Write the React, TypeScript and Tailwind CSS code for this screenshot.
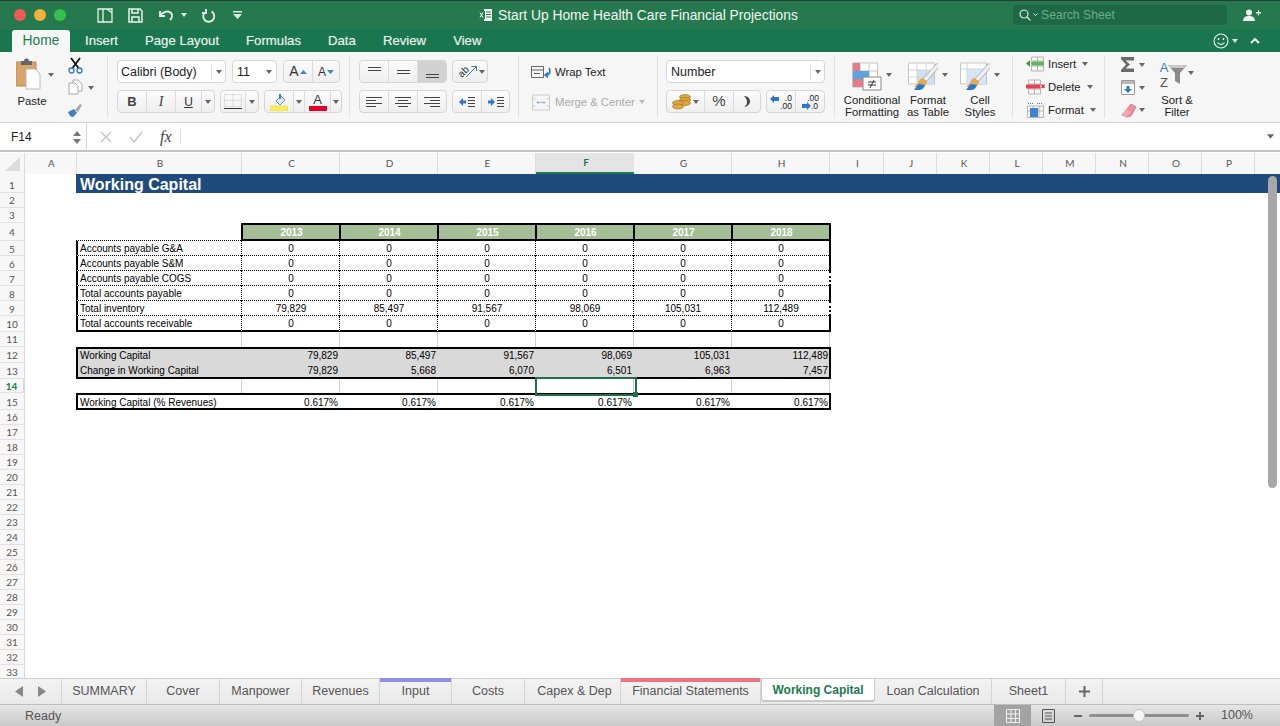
import React from "react";

const years = ["2013", "2014", "2015", "2016", "2017", "2018"];
const colHeads: [string, string][] = [
  ["A", "w-[52px]"], ["B", "w-[165px]"], ["C", "w-[98px]"], ["D", "w-[98px]"], ["E", "w-[98px]"], ["F", "w-[98px]"],
  ["G", "w-[98px]"], ["H", "w-[98px]"], ["I", "w-[54px]"], ["J", "w-[53px]"], ["K", "w-[53px]"], ["L", "w-[53px]"],
  ["M", "w-[53px]"], ["N", "w-[53px]"], ["O", "w-[53px]"], ["P", "w-[53px]"],
];
const tabs: { name: string; w: string; bar?: string }[] = [
  { name: "SUMMARY", w: "w-[85px]" },
  { name: "Cover", w: "w-[73px]" },
  { name: "Manpower", w: "w-[82px]" },
  { name: "Revenues", w: "w-[78px]" },
  { name: "Input", w: "w-[72px]", bar: "bg-[#8f8fe8]" },
  { name: "Costs", w: "w-[73px]" },
  { name: "Capex & Dep", w: "w-[96px] pl-[4px]" },
  { name: "Financial Statements", w: "w-[140px]", bar: "bg-[#f0727f]" },
];
const GRID = "grid grid-cols-[25px_51px_165px_98px_98px_98px_98px_98px_98px_55px_53px_53px_53px_53px_53px_53px_53px_1fr]";

const bodyRows = [
  { n: 5, h: "h-[15px]", label: "Accounts payable G&A", v: ["0", "0", "0", "0", "0", "0"] },
  { n: 6, h: "h-[15px]", label: "Accounts payable S&M", v: ["0", "0", "0", "0", "0", "0"] },
  { n: 7, h: "h-[15px]", label: "Accounts payable COGS", v: ["0", "0", "0", "0", "0", "0"], dotEnd: true },
  { n: 8, h: "h-[15px]", label: "Total accounts payable", v: ["0", "0", "0", "0", "0", "0"] },
  { n: 9, h: "h-[15px]", label: "Total inventory", v: ["79,829", "85,497", "91,567", "98,069", "105,031", "112,489"], dotEnd: true },
  { n: 10, h: "h-[16px]", label: "Total accounts receivable", v: ["0", "0", "0", "0", "0", "0"], last: true },
];

function Caret({ className = "" }: { className?: string }) {
  return (
    <svg width="6" height="4" viewBox="0 0 6 4" className={"shrink-0 " + className}>
      <path d="M0 0h6L3 4z" fill="#666" />
    </svg>
  );
}

function RowNum({ n, active, pad = "" }: { n: number; active?: boolean; pad?: string }) {
  return (
    <div
      className={
        "flex items-center justify-center border-r border-b border-r-[#d8d8d8] border-b-[#e2e2e2] bg-[#f7f7f7] font-['Lato',sans-serif] text-[10px] " +
        pad + " " +
        (active ? "border-r-2 border-r-[#1d7a50] font-bold text-[#1d7a50]" : "text-[#555]")
      }
    >
      {n}
    </div>
  );
}

function Seg({ className = "", children }: { className?: string; children: React.ReactNode }) {
  return (
    <div className={"flex h-[23px] overflow-hidden rounded-[4px] border border-[#d6d6d6] bg-linear-to-b from-[#fbfbfb] to-[#efefef] " + className}>
      {children}
    </div>
  );
}

function SegBtn({ className = "", children }: { className?: string; children: React.ReactNode }) {
  return <div className={"flex items-center justify-center border-r border-[#dcdcdc] last:border-r-0 " + className}>{children}</div>;
}

function Lines({ a, b, c, d }: { a: number[]; b: number[]; c: number[]; d: number[] }) {
  return (
    <svg width="16" height="12" viewBox="0 0 16 12" stroke="#444" strokeWidth="1">
      <path d={`M${a[0]} 1.5H${a[1]}M${b[0]} 4.5H${b[1]}M${c[0]} 7.5H${c[1]}M${d[0]} 10.5H${d[1]}`} />
    </svg>
  );
}

function IndentIcon({ flip }: { flip?: boolean }) {
  return (
    <svg width="18" height="12" viewBox="0 0 18 12">
      <path d={flip ? "M1 4.500h3V2l4 4-4 4V7.500H1z" : "M8 4.500H5V2L1 6l4 4V7.500h3z"} fill="#2f76c4" />
      <path d="M10 1.500h7M10 4.500h7M10 7.500h7M10 10.500h7" stroke="#444" />
    </svg>
  );
}

function Brush() {
  return (
    <>
      <path d="M28 2 15 17l3 3L31 5c1-2-1-4-3-3z" fill="#eee" stroke="#999" strokeWidth=".7" />
      <path d="M14 16c-3 1-3 3-4 5l-4 4h7c3 0 6-2 6-6z" fill="#e0a95a" />
      <path d="M6 28c2-2 3-5 5-6l6 1c-1 3-3 5-6 5z" fill="#2f76c4" />
    </>
  );
}

export default function App() {
  return (
    <div className="flex h-[726px] w-[1280px] flex-col overflow-hidden bg-white font-['Liberation_Sans',Arial,sans-serif] text-black">
      {/* title bar */}
      <div className="flex h-[29px] shrink-0 items-center border-t border-t-[#2c3a33] bg-[#26794f] text-white">
        <div className="flex w-[479px] items-center pl-[14px]">
          <span className="h-3 w-3 rounded-full bg-[#ee5c54]" />
          <span className="ml-2 h-3 w-3 rounded-full bg-[#f3b13c]" />
          <span className="ml-2 h-3 w-3 rounded-full bg-[#36c04b]" />
          <svg width="16" height="15" viewBox="0 0 16 15" className="ml-[31px]" fill="none" stroke="#e8f2ec" strokeWidth="1.300">
            <path d="M1 1h14v13H1zM6 1v13M10 1l5 4v9" />
          </svg>
          <svg width="15" height="15" viewBox="0 0 15 15" className="ml-[15px]" fill="none" stroke="#e8f2ec" strokeWidth="1.500">
            <path d="M1 1h11l2 2v11H1zM4 1v4h6V1M4 14V9h7v5" />
          </svg>
          <svg width="16" height="12" viewBox="0 0 16 12" className="ml-[15px]" fill="none" stroke="#e8f2ec" strokeWidth="1.800">
            <path d="M2 2v5h5M2 7c2-4 8-6 11-3 2 2 1 5-1 7" />
          </svg>
          <Caret className="ml-[7px] [&>path]:fill-[#dcebe2]" />
          <svg width="15" height="15" viewBox="0 0 15 15" className="ml-[14px]" fill="none" stroke="#e8f2ec" strokeWidth="1.800">
            <path d="M5 3.500a5.500 5.500 0 1 0 5.500 0M5 1v4H1" />
          </svg>
          <svg width="9" height="8" viewBox="0 0 9 8" className="ml-[17px]">
            <path d="M0 0h9v1.500H0zM0 3h9L4.500 8z" fill="#dcebe2" />
          </svg>
        </div>
        <div className="flex w-[534px] items-center">
          <svg width="14" height="14" viewBox="0 0 14 14" className="mr-[5px]">
            <path d="M5 1h8v12H5z" fill="#f4f8f5" />
            <path d="M7 4h5M7 6.500h5M7 9h5" stroke="#26794f" />
            <path d="M0 3h6v8H0z" fill="#26794f" />
            <path d="M1 4.500l3 5M4 4.500l-3 5" stroke="#fff" />
          </svg>
          <span className="pt-[3px] text-[13.800px] text-[#eef5f0]">Start Up Home Health Care Financial Projections</span>
        </div>
        <div className="flex h-[20px] w-[214px] items-center rounded-[4px] bg-[#1e6845] pl-[6px]">
          <svg width="12" height="12" viewBox="0 0 12 12" fill="none" stroke="#d9e8df" strokeWidth="1.200">
            <circle cx="5" cy="5" r="4" />
            <path d="M8 8l3.500 3.500" />
          </svg>
          <svg width="5" height="4" viewBox="0 0 5 4" className="ml-[2px]" fill="none" stroke="#d9e8df">
            <path d="M.5.500l2 2 2-2" />
          </svg>
          <span className="ml-[3px] text-[12.200px] text-[#6eab8b]">Search Sheet</span>
        </div>
        <svg width="18" height="12" viewBox="0 0 18 12" className="ml-[16px]" fill="#eef5f0">
          <circle cx="6" cy="3.500" r="3" />
          <path d="M0 12c0-4 3-5 6-5s6 1 6 5zM13 3h2V1h1v2h2v1.500h-2v2h-1v-2h-2z" />
        </svg>
      </div>

      {/* menu tabs */}
      <div className="flex h-[23px] shrink-0 items-end bg-[#19764f] pl-[12px] text-[13.200px] text-[#e6f0ea] [text-shadow:0_0_1px_rgba(255,255,255,.45)]">
        <div className="flex h-[22px] w-[58px] items-center justify-center rounded-t-[3px] bg-[#f6f6f6] pt-[1px] text-[13.800px] text-[#1d7a50] [text-shadow:none]">Home</div>
        <span className="mt-[1px] ml-[15px] self-center">Insert</span>
        <span className="mt-[1px] ml-[27px] self-center">Page Layout</span>
        <span className="mt-[1px] ml-[27px] self-center">Formulas</span>
        <span className="mt-[1px] ml-[27px] self-center">Data</span>
        <span className="mt-[1px] ml-[27px] self-center">Review</span>
        <span className="mt-[1px] ml-[27px] self-center">View</span>
        <div className="ml-auto flex items-center self-center pr-[20px]">
          <svg width="16" height="16" viewBox="0 0 16 16" fill="none" stroke="#eef5f0" strokeWidth="1.100">
            <circle cx="8" cy="8" r="7" />
            <path d="M4.500 9.500c1.500 2.500 5.500 2.500 7 0" />
            <path d="M5.500 5v2M10.500 5v2" strokeWidth="1.400" />
          </svg>
          <Caret className="ml-[3px] [&>path]:fill-[#dcebe2]" />
          <svg width="10" height="6" viewBox="0 0 10 6" className="ml-[12px]" fill="none" stroke="#eef5f0" strokeWidth="2">
            <path d="M1 5l4-4 4 4" />
          </svg>
        </div>
      </div>

      {/* ribbon */}
      <div className="flex h-[71px] shrink-0 border-b border-[#d4d4d4] bg-[#f6f6f6] text-[11.300px] text-[#222]">
        {/* clipboard */}
        <div className="my-[4px] flex w-[108px] border-r border-[#e2e2e2] pl-[15px]">
          <div className="flex w-[34px] flex-col items-center">
            <svg width="25" height="32" viewBox="0 0 25 32" className="mt-[2px] -ml-[7px]">
              <path d="M0 4h20v24H0z" fill="#d8a468" stroke="#b98a52" />
              <path d="M5 3h3a2.500 2.500 0 0 1 5 0h3v4H5z" fill="#666" />
              <path d="M10 11h9l5 5v15H10z" fill="#fff" stroke="#bbb" />
            </svg>
            <span className="mt-[3px]">Paste</span>
          </div>
          <Caret className="mt-[17px] -ml-[1px]" />
          <div className="ml-[6px] flex w-[30px] flex-col items-center">
            <svg width="15" height="17" viewBox="0 0 15 17" fill="none" className="mt-[1px]">
              <path d="M3 1l7.500 10M12 1L4.500 11" stroke="#111" strokeWidth="1.800" />
              <circle cx="3.500" cy="13.500" r="2.500" stroke="#2f76c4" strokeWidth="1.300" />
              <circle cx="11.500" cy="13.500" r="2.500" stroke="#2f76c4" strokeWidth="1.300" />
            </svg>
            <svg width="15" height="16" viewBox="0 0 15 16" fill="#fbfbfb" stroke="#aaa" className="mt-[5px]">
              <path d="M5 1h5l4 4v7H5z" />
              <path d="M1 4h6l3 3v8H1z" />
            </svg>
            <svg width="16" height="15" viewBox="0 0 16 15" className="mt-[8px]">
              <path d="M8 7l5-6 2 1-4 7z" fill="#aaa" />
              <path d="M1 9l6-3 3 4-4 4c-2 0-4-2-5-5z" fill="#3f7fc0" />
            </svg>
          </div>
          <Caret className="mt-[30px] -ml-[2px]" />
        </div>

        {/* font */}
        <div className="my-[4px] flex w-[242px] flex-col gap-[7px] border-r border-[#e2e2e2] pt-[4px] pl-[9px]">
          <div className="flex gap-[6px]">
            <div className="flex h-[23px] w-[109px] items-center rounded-[4px] border border-[#d6d6d6] bg-white pt-[1px] pl-[3px] text-[12.500px]">
              Calibri (Body)
              <span className="ml-auto flex h-[15px] w-[14px] items-center justify-center border-l border-[#ddd]"><Caret /></span>
            </div>
            <div className="flex h-[23px] w-[45px] items-center rounded-[4px] border border-[#d6d6d6] bg-white pt-[1px] pl-[4px] text-[12.500px]">
              11
              <span className="ml-auto flex h-[15px] w-[14px] items-center justify-center"><Caret /></span>
            </div>
            <Seg className="w-[57px]">
              <SegBtn className="w-[29px] gap-[1px] text-[14px] text-[#333]">
                A
                <svg width="7" height="4" viewBox="0 0 7 4"><path d="M0 4l3.500-4L7 4z" fill="#3f84c8" /></svg>
              </SegBtn>
              <SegBtn className="flex-1 gap-[1px] text-[12px] text-[#333]">
                A
                <svg width="7" height="4" viewBox="0 0 7 4"><path d="M0 0h7L3.500 4z" fill="#3f84c8" /></svg>
              </SegBtn>
            </Seg>
          </div>
          <div className="flex">
            <Seg className="w-[98px]">
              <SegBtn className="w-[29px] text-[13px] font-bold text-[#444]">B</SegBtn>
              <SegBtn className="w-[29px] font-['Liberation_Serif',serif] text-[14px] text-[#444] italic">I</SegBtn>
              <SegBtn className="w-[26px] text-[12px] text-[#333] underline">U</SegBtn>
              <SegBtn className="flex-1"><Caret /></SegBtn>
            </Seg>
            <Seg className="ml-[5px] w-[39px]">
              <SegBtn className="w-[25px]">
                <svg width="18" height="15" viewBox="0 0 18 15" fill="none">
                  <path d="M.5.500h17v12H.500zM9 .500v12M.5 6.500h17" stroke="#c4c4c4" strokeDasharray="1 1" />
                  <path d="M0 14.500h18" stroke="#333" />
                </svg>
              </SegBtn>
              <SegBtn className="flex-1"><Caret /></SegBtn>
            </Seg>
            <Seg className="ml-[5px] w-[78px]">
              <SegBtn className="w-[29px]">
                <svg width="18" height="19" viewBox="0 0 18 19">
                  <path d="M6 9l5-5 4 4-5 5z" fill="#dfe8f2" stroke="#6a8fb6" />
                  <path d="M9 2h2v5H9z" fill="#3f7fc0" />
                  <path d="M0 14h18v5H0z" fill="#f7ef55" stroke="#e2d93d" strokeWidth=".6" />
                </svg>
              </SegBtn>
              <SegBtn className="w-[11px] border-r"><Caret /></SegBtn>
              <SegBtn className="w-[26px]">
                <span className="flex flex-col items-center text-[13px] leading-[13px] text-[#333]">
                  A
                  <span className="h-[5px] w-[18px] bg-[#e4002b]" />
                </span>
              </SegBtn>
              <SegBtn className="flex-1"><Caret /></SegBtn>
            </Seg>
          </div>
        </div>

        {/* alignment */}
        <div className="my-[4px] flex w-[169px] flex-col gap-[7px] border-r border-[#e2e2e2] pt-[4px] pl-[9px]">
          <div className="flex gap-[5px]">
            <Seg className="w-[88px]">
              <SegBtn className="w-[29px] pb-[6px]">
                <svg width="13" height="4" viewBox="0 0 13 4" stroke="#444"><path d="M0 .500h13M0 3.500h13" /></svg>
              </SegBtn>
              <SegBtn className="w-[29px]">
                <svg width="13" height="4" viewBox="0 0 13 4" stroke="#444"><path d="M0 .500h13M0 3.500h13" /></svg>
              </SegBtn>
              <SegBtn className="flex-1 bg-[#d2d2d2] pt-[9px]">
                <svg width="13" height="4" viewBox="0 0 13 4" stroke="#444"><path d="M0 .500h13M0 3.500h13" /></svg>
              </SegBtn>
            </Seg>
            <Seg className="w-[36px] items-center pl-[5px]">
              <span className="-rotate-45 text-[10px] leading-[10px] text-[#333]">ab</span>
              <svg width="12" height="12" viewBox="0 0 12 12" fill="none" className="-ml-[4px]">
                <path d="M1 11L11 1M6.500 .5H11.500V5" stroke="#2f76c4" />
              </svg>
              <Caret className="ml-[2px]" />
            </Seg>
          </div>
          <div className="flex gap-[5px]">
            <Seg className="w-[88px]">
              <SegBtn className="w-[29px]"><Lines a={[0, 16]} b={[0, 10]} c={[0, 16]} d={[0, 10]} /></SegBtn>
              <SegBtn className="w-[29px]"><Lines a={[0, 16]} b={[3, 13]} c={[0, 16]} d={[3, 13]} /></SegBtn>
              <SegBtn className="flex-1"><Lines a={[0, 16]} b={[6, 16]} c={[0, 16]} d={[6, 16]} /></SegBtn>
            </Seg>
            <Seg className="w-[58px]">
              <SegBtn className="w-[29px]"><IndentIcon /></SegBtn>
              <SegBtn className="flex-1"><IndentIcon flip /></SegBtn>
            </Seg>
          </div>
        </div>

        {/* wrap and merge */}
        <div className="my-[4px] flex w-[139px] flex-col border-r border-[#e2e2e2] pl-[12px]">
          <div className="mt-[8px] flex items-center">
            <svg width="21" height="14" viewBox="0 0 21 14" fill="none">
              <path d="M.5 1.500h12v11H.500zM.5 5h12M3 8.500h6" stroke="#666" />
              <path d="M18 3c2 3 1 7-3 7M17 7.500l-3 2.500 3 2.500" stroke="#2f76c4" strokeWidth="1.600" />
            </svg>
            <span className="ml-[3px]">Wrap Text</span>
          </div>
          <div className="mt-[13px] flex items-center text-[#aaa]">
            <svg width="18" height="17" viewBox="0 0 18 17" fill="none" className="ml-[1px]">
              <path d="M.5 1h17v15H.500zM.5 5h3M14.500 5h3M.5 12h3M14.500 12h3" stroke="#ccc" />
              <path d="M5 8.500h8M6.500 7L5 8.500 6.500 10M11.500 7L13 8.500 11.500 10" stroke="#8db6de" />
            </svg>
            <span className="ml-[5px]">Merge & Center</span>
            <Caret className="ml-[4px] opacity-40" />
          </div>
        </div>

        {/* number */}
        <div className="my-[4px] flex w-[177px] flex-col gap-[7px] border-r border-[#e2e2e2] pt-[4px] pl-[8px]">
          <div className="flex h-[23px] w-[159px] items-center rounded-[4px] border border-[#d6d6d6] bg-white pt-[1px] pl-[4px] text-[12.500px]">
            Number
            <span className="ml-auto flex h-[15px] w-[14px] items-center justify-center border-l border-[#ddd]"><Caret /></span>
          </div>
          <div className="flex gap-[5px]">
            <Seg className="w-[95px]">
              <SegBtn className="w-[38px] gap-[2px]">
                <svg width="19" height="16" viewBox="0 0 19 16">
                  <ellipse cx="13" cy="3" rx="5.500" ry="2.500" fill="#e0a83c" stroke="#9b6f1c" strokeWidth=".6" />
                  <ellipse cx="13" cy="6" rx="5.500" ry="2.500" fill="#e0a83c" stroke="#9b6f1c" strokeWidth=".6" />
                  <ellipse cx="13" cy="9" rx="5.500" ry="2.500" fill="#e0a83c" stroke="#9b6f1c" strokeWidth=".6" />
                  <ellipse cx="6" cy="9" rx="5.500" ry="2.500" fill="#e0a83c" stroke="#9b6f1c" strokeWidth=".6" />
                  <ellipse cx="6" cy="12.500" rx="5.500" ry="2.500" fill="#e0a83c" stroke="#9b6f1c" strokeWidth=".6" />
                </svg>
                <Caret />
              </SegBtn>
              <SegBtn className="w-[29px] text-[15px] text-[#444]">%</SegBtn>
              <SegBtn className="flex-1 text-[15px] font-bold text-[#444]">
                <svg width="6" height="11" viewBox="0 0 6 11"><path d="M0 0c4 0 6 3 6 5.500S3 11 0 11c2-1 3-3 3-5S2 2 0 0z" fill="#444" /></svg>
              </SegBtn>
            </Seg>
            <Seg className="w-[59px]">
              <SegBtn className="w-[29px]">
                <svg width="9" height="8" viewBox="0 0 9 8" className="mb-[5px]"><path d="M0 4l4-4v2h5v4H4v2z" fill="#2f76c4" /></svg>
                <span className="ml-[1px] text-right text-[8.500px] leading-[8px]">.0<br />.00</span>
              </SegBtn>
              <SegBtn className="flex-1 flex-col">
                <span className="self-end pr-[5px] text-[8.500px] leading-[8px]">.00</span>
                <span className="flex items-center">
                  <svg width="9" height="8" viewBox="0 0 9 8"><path d="M9 4L5 0v2H0v4h5v2z" fill="#2f76c4" /></svg>
                  <span className="text-[8.500px] leading-[8px]">.0</span>
                </span>
              </SegBtn>
            </Seg>
          </div>
        </div>

        {/* styles */}
        <div className="my-[4px] flex w-[178px] border-r border-[#e2e2e2] pl-[8px] leading-[12px]">
          <div className="flex w-[58px] flex-col items-center">
            <div className="mt-[6px] flex h-[34px] items-start">
              <svg width="30" height="29" viewBox="0 0 30 29">
                <path d="M.5 1h25v24H.500zM8 1v24M17 1v24M.5 9h25M.5 17h25" fill="#fff" stroke="#c4c4c4" />
                <path d="M1 1h7v8H1z" fill="#e67c87" />
                <path d="M8 9h9v8H8z" fill="#5aa5e0" />
                <path d="M1 9h7v8H1z" fill="#5aa5e0" />
                <path d="M1 17h10v8H1z" fill="#e67c87" />
                <path d="M11 15h18v13H11z" fill="#fff" stroke="#888" />
                <path d="M16 20h8M16 23h8M22 18l-4 8" stroke="#333" fill="none" />
              </svg>
              <Caret className="mt-[11px] ml-[4px]" />
            </div>
            <span className="text-center">Conditional<br />Formatting</span>
          </div>
          <div className="flex w-[54px] flex-col items-center">
            <div className="mt-[6px] flex h-[34px] items-start">
              <svg width="30" height="29" viewBox="0 0 30 29">
                <path d="M.5 1h26v21H.500z" fill="#fff" stroke="#c4c4c4" />
                <path d="M9 8h17v14H9z" fill="#cfe0f4" />
                <path d="M9 1v21M18 1v21M.5 8h26M.5 15h26" stroke="#d4d4d4" fill="none" />
                <Brush />
              </svg>
              <Caret className="mt-[11px] ml-[4px]" />
            </div>
            <span className="text-center">Format<br />as Table</span>
          </div>
          <div className="flex w-[50px] flex-col items-center">
            <div className="mt-[6px] flex h-[34px] items-start">
              <svg width="30" height="29" viewBox="0 0 30 29">
                <path d="M.5 1h26v21H.500z" fill="#fff" stroke="#c4c4c4" />
                <path d="M7 7h19v15H7z" fill="#d6e6f7" />
                <path d="M7 1v21M.5 7h26" stroke="#d4d4d4" fill="none" />
                <Brush />
              </svg>
              <Caret className="mt-[11px] ml-[4px]" />
            </div>
            <span className="text-center">Cell<br />Styles</span>
          </div>
        </div>

        {/* cells */}
        <div className="my-[4px] flex w-[92px] flex-col gap-[7px] border-r border-[#e2e2e2] pl-[13px]">
          <div className="flex h-[16px] items-center">
            <svg width="19" height="16" viewBox="0 0 19 16" fill="none">
              <path d="M5.500 1h12v14h-12zM5.500 5h12M5.500 10h12M11.500 1v14" stroke="#b5b5b5" />
              <path d="M6 5.500h12v4H6z" fill="#5db85c" />
              <path d="M0 7.500l4-3.500v7z" fill="#3b9e3a" />
            </svg>
            <span className="ml-[3px]">Insert</span>
            <Caret className="ml-[6px]" />
          </div>
          <div className="flex h-[16px] items-center">
            <svg width="19" height="16" viewBox="0 0 19 16" fill="none">
              <path d="M2.500 1h12v14h-12zM2.500 5h12M2.500 10h12M8.500 1v14" stroke="#b5b5b5" />
              <path d="M0 5.500h14v4H0z" fill="#e4414f" />
              <path d="M15.500 5.500l3 3.500M18.500 5.500l-3 3.500" stroke="#d92f3e" strokeWidth="1.300" />
            </svg>
            <span className="ml-[3px]">Delete</span>
            <Caret className="ml-[6px]" />
          </div>
          <div className="flex h-[16px] items-center">
            <svg width="19" height="16" viewBox="0 0 19 16" fill="none">
              <path d="M1.500 4h16v11.500h-16zM7 4v11.500M13 4v11.500M1.500 9h16" stroke="#b5b5b5" />
              <path d="M4 6h8v9H4z" fill="#3f84c8" />
              <path d="M2 1.500h6M11 1.500h6" stroke="#3f84c8" strokeDasharray="1 1" />
            </svg>
            <span className="ml-[3px]">Format</span>
            <Caret className="ml-[6px]" />
          </div>
        </div>

        {/* editing */}
        <div className="my-[4px] flex pl-[16px]">
          <div className="flex w-[26px] flex-col pt-[1px]">
            <div className="flex h-[16px] items-center">
              <svg width="14" height="15" viewBox="0 0 14 15"><path d="M0 0h13v3.500H4.500L9 7.500 4.500 11.500H13V15H0v-2l5-5.500L0 2z" fill="#6a6a6a" /></svg>
              <Caret className="ml-[4px]" />
            </div>
            <div className="mt-[7px] flex h-[16px] items-center">
              <svg width="14" height="15" viewBox="0 0 14 15" fill="none">
                <path d="M.5.500h13v14H.500z" fill="#fff" stroke="#999" />
                <path d="M1 1h12v3H1z" fill="#bbb" />
                <path d="M5.500 6h3v3H11l-4 4-4-4h2.500z" fill="#2f76c4" />
              </svg>
              <Caret className="ml-[4px]" />
            </div>
            <div className="mt-[7px] flex h-[16px] items-center">
              <svg width="16" height="15" viewBox="0 0 16 15">
                <path d="M10 1l5 3-5 9-4 1-5-2z" fill="#ef8d9b" stroke="#c76473" strokeWidth=".7" />
                <path d="M1 12l4-6 5 3-4 5z" fill="#f3a9b4" />
              </svg>
              <Caret className="ml-[2px]" />
            </div>
          </div>
          <div className="ml-[5px] flex w-[50px] flex-col items-center leading-[12px]">
            <div className="mt-[4px] flex h-[36px] items-start">
              <span className="flex flex-col items-center text-[13px] leading-[15px]">
                <span className="text-[#3a7fc6]">A</span>
                <span className="text-[#555]">Z</span>
              </span>
              <svg width="19" height="20" viewBox="0 0 19 20" className="mt-[5px]">
                <path d="M0 0h19l-7 8v11l-5-3V8z" fill="#8a8a8a" />
                <path d="M0 0h19l-3 3H3z" fill="#c8c8c8" />
              </svg>
              <Caret className="mt-[11px] ml-[1px]" />
            </div>
            <span className="text-center">Sort &<br />Filter</span>
          </div>
        </div>
      </div>

      {/* formula bar */}
      <div className="flex h-[27px] shrink-0 items-center bg-white">
        <div className="flex h-full w-[87px] items-center border-r border-[#d4d4d4] pt-[1px] pl-[11px] text-[12px] text-[#222]">
          F14
          <span className="ml-[41px] flex flex-col gap-[3px]">
            <svg width="8" height="5" viewBox="0 0 8 5"><path d="M0 5l4-5 4 5z" fill="#777" /></svg>
            <svg width="8" height="5" viewBox="0 0 8 5"><path d="M0 0h8L4 5z" fill="#777" /></svg>
          </span>
        </div>
        <svg width="12" height="12" viewBox="0 0 12 12" className="ml-[13px]" fill="none" stroke="#c8c8c8" strokeWidth="1.600"><path d="M1 1l10 10M11 1L1 11" /></svg>
        <svg width="14" height="12" viewBox="0 0 14 12" className="ml-[17px]" fill="none" stroke="#c8c8c8" strokeWidth="1.600"><path d="M1 6l4 5 8-10" /></svg>
        <span className="ml-[17px] pt-[1px] font-['Liberation_Serif',serif] text-[16px] text-[#444] italic">fx</span>
        <span className="ml-[8px] h-[15px] border-l border-[#ddd]" />
        <Caret className="mr-[6px] ml-auto h-[5px] w-[7px]" />
      </div>
      <div className="h-[3px] shrink-0 border-t-2 border-[#c4c4c4]" />

      {/* column headers */}
      <div className="flex h-[21px] shrink-0 bg-[#f7f7f7] font-['Lato',sans-serif] text-[10px] text-[#555]">
        <div className="flex w-[25px] shrink-0 items-end justify-center border-r border-[#dcdcdc] pb-[3px]">
          <svg width="15" height="14" viewBox="0 0 15 14"><path d="M15 0v14H0z" fill="#dcdcdc" /></svg>
        </div>
        {colHeads.map(([c, w]) => (
          <div
            key={c}
            className={
              "flex shrink-0 items-center justify-center pl-[2px] " + w + " " +
              (c === "F" ? "border-b-2 border-b-[#1d7a50] bg-[#e4e4e4] font-bold text-[#1d7a50]" : "border-r border-[#dcdcdc]")
            }
          >
            {c}
          </div>
        ))}
        <div className="flex-1" />
      </div>

      {/* sheet */}
      <div className="relative min-h-0 flex-1 overflow-hidden text-[10px] leading-none">
        <div className={GRID + " h-[19px]"}>
          <RowNum n={1} pad="pt-[3px]" />
          <div />
          <div className="col-start-3 col-end-[-1] flex items-center bg-[#1f4b7c] pt-[2px] pl-[4px] text-[16px] font-bold text-white">Working Capital</div>
        </div>
        {[2, 3].map(n => (
          <div key={n} className={GRID + " h-[15px]"}><RowNum n={n} /></div>
        ))}

        <div className={GRID + " h-[18px]"}>
          <RowNum n={4} pad="pt-[1px]" />
          <div />
          <div className="border-b border-black [border-bottom-style:dotted]!" />
          {years.map(y => (
            <div key={y} className="flex items-center justify-center border-t-2 border-b-2 border-l-2 border-black bg-[#a4bf96] pt-[1px] pl-[1px] font-bold text-white">{y}</div>
          ))}
          <div className="border-l-2 border-black" />
        </div>

        {bodyRows.map(r => (
          <div key={r.n} className={GRID + " " + r.h}>
            <RowNum n={r.n} pad="pt-[1px]" />
            <div />
            <div className={"flex items-center border-l-2 border-black pt-[1px] pl-[2px] " + (r.last ? "border-b-2" : "border-b [border-bottom-style:dotted]!")}>{r.label}</div>
            {r.v.map((v, i) => (
              <div
                key={i}
                className={
                  "flex items-center justify-center border-l border-black pt-[1px] pl-[1px] [border-left-style:dotted]! " +
                  (r.last ? "border-b-2" : "border-b [border-bottom-style:dotted]!")
                }
              >
                {v}
              </div>
            ))}
            <div className={"border-l-2 border-black " + (r.dotEnd ? "[border-left-style:dotted]!" : "")} />
          </div>
        ))}

        <div className={GRID + " h-[15px]"}>
          <RowNum n={11} />
          <div />
          <div />
          {years.map(y => <div key={y} className="border-l border-[#d0d0d0]" />)}
          <div className="border-l border-[#d0d0d0]" />
        </div>

        <div className={GRID + " h-[16px]"}>
          <RowNum n={12} />
          <div />
          <div className="flex items-center border-t-2 border-l-2 border-black bg-[#d9d9d9] pl-[2px]">Working Capital</div>
          {["79,829", "85,497", "91,567", "98,069", "105,031", "112,489"].map(v => (
            <div key={v} className="flex items-center justify-end border-t-2 border-black bg-[#d9d9d9] pr-[1px]">{v}</div>
          ))}
          <div className="border-l-2 border-black" />
        </div>
        <div className={GRID + " h-[16px]"}>
          <RowNum n={13} />
          <div />
          <div className="flex items-center border-b-2 border-l-2 border-black bg-[#d9d9d9] pt-[1px] pl-[2px]">Change in Working Capital</div>
          {["79,829", "5,668", "6,070", "6,501", "6,963", "7,457"].map(v => (
            <div key={v} className="flex items-center justify-end border-b-2 border-black bg-[#d9d9d9] pt-[1px] pr-[1px]">{v}</div>
          ))}
          <div className="border-l-2 border-black" />
        </div>

        <div className={GRID + " h-[14px]"}>
          <RowNum n={14} active />
          <div />
          <div />
          {years.map(y => (
            <div key={y} className="relative border-l border-[#d0d0d0]">
              {y === "2016" && (
                <div className="absolute -top-[2px] -left-[1px] z-10 h-[19px] w-[102px] border-2 border-[#1d6f4b]">
                  <span className="absolute -right-[3px] -bottom-[3px] h-[5px] w-[5px] bg-[#1d6f4b]" />
                </div>
              )}
            </div>
          ))}
          <div className="border-l border-[#d0d0d0]" />
        </div>

        <div className={GRID + " h-[17px]"}>
          <RowNum n={15} pad="pt-[2px]" />
          <div />
          <div className="flex items-center border-t-2 border-b-2 border-l-2 border-black pt-[2px] pl-[2px]">Working Capital (% Revenues)</div>
          {years.map(y => (
            <div key={y} className="flex items-center justify-end border-t-2 border-b-2 border-black pt-[2px] pr-[1px]">0.617%</div>
          ))}
          <div className="border-l-2 border-black" />
        </div>

        {Array.from({ length: 18 }, (_, i) => i + 16).map(n => (
          <div key={n} className={GRID + " h-[15px]"}><RowNum n={n} /></div>
        ))}

        <div className="absolute top-[2px] right-[3px] h-[312px] w-[9px] rounded-full bg-[#a8a8a8]" />
      </div>

      {/* sheet tabs */}
      <div className="flex h-[26px] shrink-0 border-t border-[#cfcfcf] bg-linear-to-b from-[#f3f3f3] to-[#e9e9e9] text-[12.500px] text-[#555]">
        <div className="flex w-[62px] shrink-0 items-center border-r border-[#d4d4d4] pl-[15px]">
          <svg width="8" height="11" viewBox="0 0 8 11"><path d="M8 0v11L0 5.500z" fill="#888" /></svg>
          <svg width="8" height="11" viewBox="0 0 8 11" className="ml-[15px]"><path d="M0 0v11l8-5.500z" fill="#888" /></svg>
        </div>
        {tabs.map(t => (
          <div key={t.name} className={"relative flex shrink-0 items-center justify-center border-r border-[#d4d4d4] " + t.w}>
            {t.bar && <span className={"absolute inset-x-0 -top-[1px] h-[4px] " + t.bar} />}
            {t.name}
          </div>
        ))}
        <div className="flex h-[23px] w-[114px] shrink-0 items-center justify-center rounded-b-[3px] border-x border-b-2 border-[#c8c8c8] bg-white text-[12px] font-bold text-[#1d7a50]">
          Working Capital
        </div>
        <div className="flex w-[117px] shrink-0 items-center justify-center border-r border-[#d4d4d4]">Loan Calculation</div>
        <div className="flex w-[74px] shrink-0 items-center justify-center border-r border-[#d4d4d4]">Sheet1</div>
        <div className="flex w-[37px] shrink-0 items-center justify-center border-r border-[#d4d4d4]">
          <svg width="11" height="11" viewBox="0 0 11 11"><path d="M4.500 0h2v4.500H11v2H6.500V11h-2V6.500H0v-2h4.500z" fill="#666" /></svg>
        </div>
      </div>

      {/* status bar */}
      <div className="flex h-[22px] shrink-0 items-center border-t border-[#bdbdbd] bg-linear-to-b from-[#e6e6e6] to-[#c9c9c9] pl-[25px] text-[12.500px] text-[#555]">
        <span className="pt-[1px]">Ready</span>
        <div className="ml-auto flex h-full w-[37px] items-center justify-center bg-[#a3a3a3]">
          <svg width="14" height="14" viewBox="0 0 14 14" fill="none" stroke="#eee"><path d="M.5.500h13v13H.500zM5 .500v13M9.500.500v13M.5 5h13M.5 9.500h13" /></svg>
        </div>
        <svg width="13" height="14" viewBox="0 0 13 14" fill="none" stroke="#555" className="ml-[11px]"><path d="M.5.500h12v13H.500zM3 4h7M3 7h7M3 10h7" /></svg>
        <svg width="8" height="2" viewBox="0 0 8 2" className="ml-[19px]"><path d="M0 0h8v2H0z" fill="#666" /></svg>
        <div className="relative ml-[7px] h-[3px] w-[100px] rounded-full bg-[#8f8f8f]">
          <span className="absolute top-[-5px] left-[44px] h-[13px] w-[12px] rounded-full border border-[#c4c4c4] bg-[#f6f6f6]" />
        </div>
        <svg width="8" height="8" viewBox="0 0 8 8" className="ml-[7px]"><path d="M3 0h2v3h3v2H5v3H3V5H0V3h3z" fill="#666" /></svg>
        <span className="mr-[27px] ml-[17px]">100%</span>
      </div>
    </div>
  );
}
